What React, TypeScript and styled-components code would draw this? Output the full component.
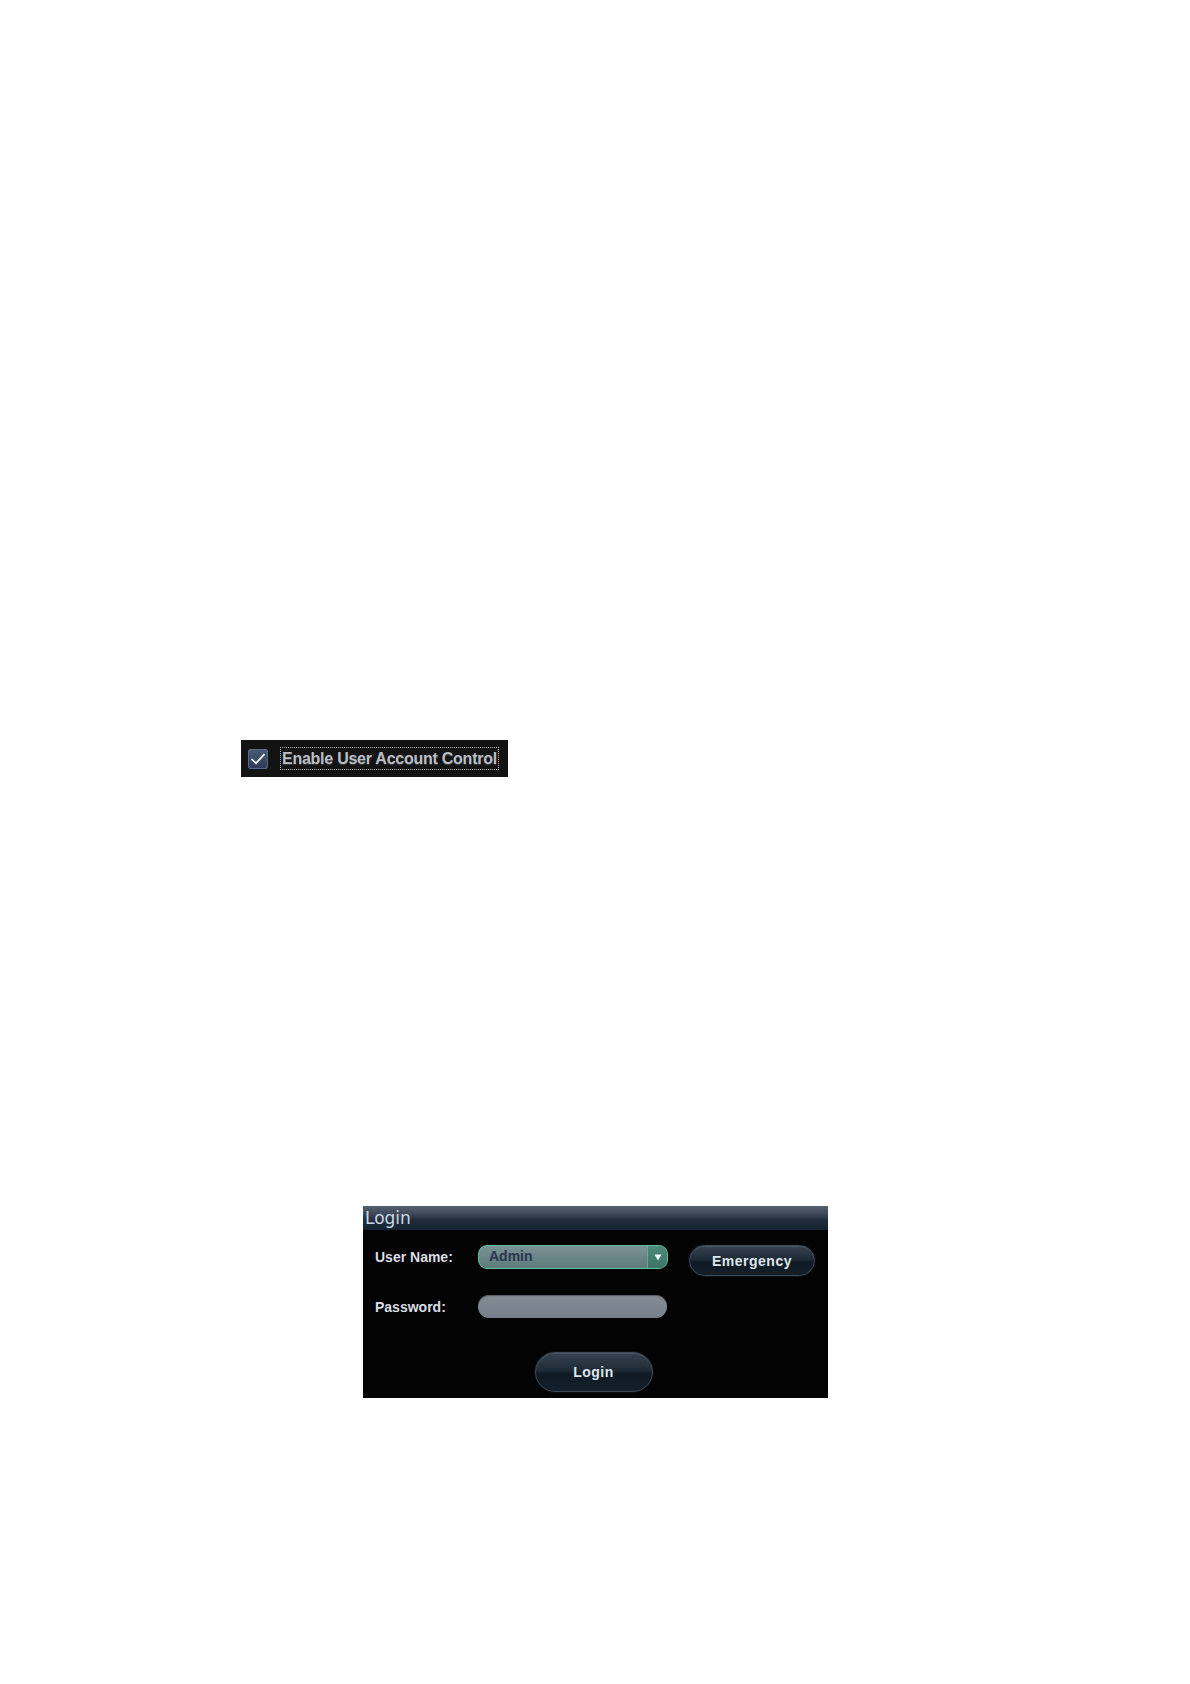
import React from "react";
import styled, { createGlobalStyle } from "styled-components";

const GlobalStyle = createGlobalStyle`
  html, body {
    margin: 0;
    padding: 0;
    background: #ffffff;
  }
  body {
    font-family: "Liberation Sans", Arial, sans-serif;
  }
`;

const Page = styled.div`
  display: flex;
  flex-direction: column;
  align-items: flex-start;
  padding: 740px 0 0 241px;
  min-height: 1684px;
  box-sizing: border-box;
`;

const CheckBar = styled.label`
  display: flex;
  align-items: center;
  width: 267px;
  height: 37px;
  box-sizing: border-box;
  padding-left: 7px;
  background: #131313;
`;

const CheckBox = styled.span`
  display: flex;
  align-items: center;
  justify-content: center;
  width: 20px;
  height: 20px;
  border-radius: 3px;
  background: linear-gradient(#4a5c78, #2c3a52);
  box-shadow: inset 0 0 0 1px #56688a;
`;

const CheckText = styled.span`
  margin-left: 12px;
  padding: 1px 1px;
  border: 1px dotted #b0b0b0;
  font-size: 16px;
  font-weight: 700;
  line-height: 19px;
  letter-spacing: -0.25px;
  color: #b9bcc3;
  text-shadow: 0 1px 0 #3a3a3a;
  white-space: nowrap;
`;

const Panel = styled.div`
  display: flex;
  flex-direction: column;
  width: 465px;
  height: 192px;
  margin: 429px 0 0 122px;
  background: #030303;
`;

const TitleBar = styled.div`
  display: flex;
  align-items: center;
  height: 24px;
  padding-left: 2px;
  background: linear-gradient(#56616f 0%, #3b4757 35%, #1f2d3c 60%, #142232 100%);
  font-family: "DejaVu Sans", Verdana, sans-serif;
  font-size: 17px;
  color: #cdd8e4;
`;

const Body = styled.div`
  display: flex;
  flex-direction: column;
  padding: 15px 0 0 12px;
`;

const Row = styled.div<{ $top?: number }>`
  display: flex;
  align-items: flex-start;
  margin-top: ${p => p.$top ?? 0}px;
`;

const Label = styled.span`
  width: 103px;
  line-height: 24px;
  font-size: 14px;
  font-weight: 700;
  color: #dadee5;
`;

const Select = styled.div`
  display: flex;
  width: 190px;
  height: 24px;
  box-sizing: border-box;
  border: 1.5px solid #5cbf9e;
  border-radius: 9px;
  overflow: hidden;
  background: linear-gradient(#7a9293, #6a8586 55%, #5f7b7c);
`;

const SelectValue = styled.span`
  flex: 1;
  padding-left: 10px;
  line-height: 21px;
  font-size: 14px;
  font-weight: 700;
  color: #2b3552;
`;

const SelectArrow = styled.span`
  display: flex;
  align-items: center;
  justify-content: center;
  width: 19px;
  background: linear-gradient(#4d8a7c, #3b7466);
  border-left: 1px solid #6aa796;
`;

const Input = styled.div`
  width: 189px;
  height: 23px;
  border-radius: 11px;
  background: linear-gradient(#838c95, #78818b);
  box-shadow: inset 0 1px 1px rgba(0, 0, 0, 0.35);
`;

const PillButton = styled.button<{ $w: number; $h: number }>`
  display: flex;
  align-items: center;
  justify-content: center;
  width: ${p => p.$w}px;
  height: ${p => p.$h}px;
  padding: 0;
  border: 1px solid #3b4855;
  border-radius: ${p => p.$h / 2}px;
  background: linear-gradient(#34424f 0%, #1f2c38 45%, #0f1a24 55%, #142029 100%);
  box-shadow: 0 0 0 1px #0c0f12, inset 0 1px 0 rgba(255, 255, 255, 0.12);
  font-family: "Liberation Sans", Arial, sans-serif;
  font-size: 14px;
  font-weight: 700;
  color: #dfe5ec;
  letter-spacing: 0.5px;
  cursor: pointer;
`;

const Gap = styled.span<{ $w: number }>`
  width: ${p => p.$w}px;
  flex: none;
`;

const Center = styled.div`
  display: flex;
  justify-content: center;
  margin-top: 33px;
  padding-right: 16px;
`;

export default function App() {
  return (
    <>
      <GlobalStyle />
      <Page>
        <CheckBar>
          <CheckBox>
            <svg width="16" height="14" viewBox="0 0 16 14">
              <path d="M1.5 7 L6 11.2 L14.5 2.2" fill="none" stroke="#f4f6fa" strokeWidth="1.7" />
            </svg>
          </CheckBox>
          <CheckText>Enable User Account Control</CheckText>
        </CheckBar>

        <Panel>
          <TitleBar>Login</TitleBar>
          <Body>
            <Row>
              <Label>User Name:</Label>
              <Select>
                <SelectValue>Admin</SelectValue>
                <SelectArrow>
                  <svg width="8" height="7" viewBox="0 0 8 7">
                    <path d="M0.5 0.5 H7.5 L4 6.5 Z" fill="#f2f6f4" />
                  </svg>
                </SelectArrow>
              </Select>
              <Gap $w={21} />
              <PillButton $w={126} $h={31}>Emergency</PillButton>
            </Row>
            <Row $top={19}>
              <Label>Password:</Label>
              <Input />
            </Row>
            <Center>
              <PillButton $w={118} $h={40}>Login</PillButton>
            </Center>
          </Body>
        </Panel>
      </Page>
    </>
  );
}
